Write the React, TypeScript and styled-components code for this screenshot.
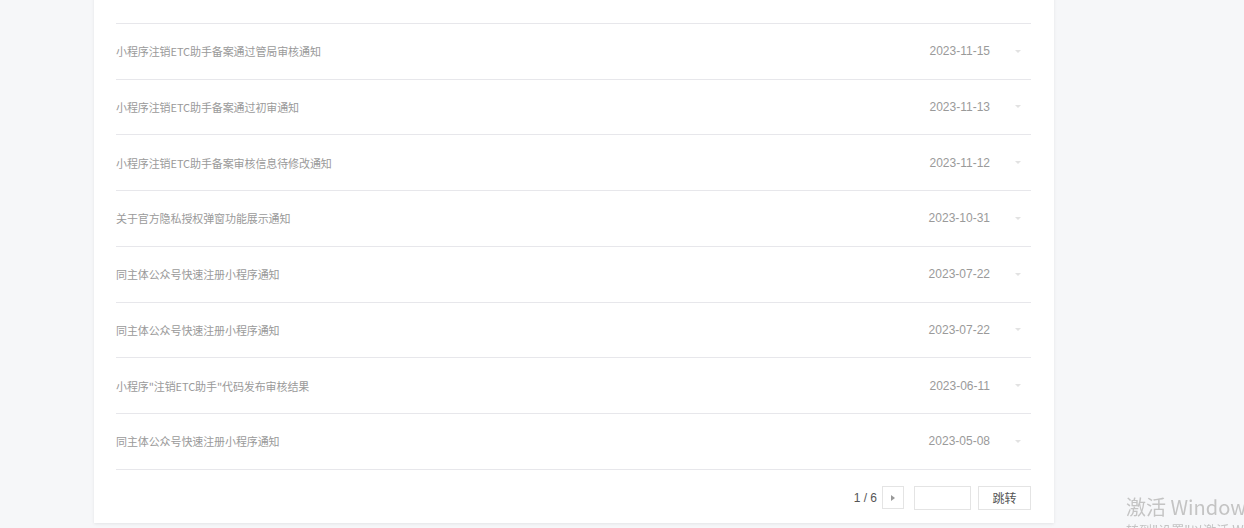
import React from 'react';
import styled, { createGlobalStyle } from 'styled-components';

const GlobalStyle = createGlobalStyle`
  html, body {
    margin: 0;
    padding: 0;
    background: #f6f7f9;
    font-family: "Noto Sans", "Noto Sans CJK SC", sans-serif;
    overflow: hidden;
  }
`;

const Page = styled.div`
  display: flex;
  padding-left: 94px;
  height: 528px;
  overflow: hidden;
`;

const Card = styled.section`
  width: 960px;
  margin-top: -32px;
  align-self: flex-start;
  background: #fff;
  box-shadow: 0 1px 3px rgba(0, 0, 0, 0.08);
  padding: 0 23px 13px 22px;
  box-sizing: border-box;
`;

const List = styled.ul`
  list-style: none;
  margin: 0;
  padding: 0;
`;

const Row = styled.li`
  display: flex;
  align-items: center;
  height: 55.75px;
  box-sizing: border-box;
  border-bottom: 1px solid #e7e7eb;
  font-size: 12px;
  color: #9a9a9a;
`;

const Title = styled.span`
  flex: 1;
  font-family: "Noto Sans CJK SC", sans-serif;
  font-size: 11px;
  letter-spacing: -0.1px;
`;

const Date = styled.span`
  font-family: "Liberation Sans", sans-serif;
  font-size: 12px;
  color: #9a9a9a;
`;

const Caret = styled.span`
  width: 0;
  height: 0;
  margin: 0 10px 0 25px;
  border-left: 3px solid transparent;
  border-right: 3px solid transparent;
  border-top: 3px solid #e2e2e2;
`;

const Pager = styled.div`
  display: flex;
  justify-content: flex-end;
  align-items: center;
  padding-top: 16px;
  font-family: "Liberation Sans", sans-serif;
  font-size: 12px;
  color: #555;
`;

const PageNum = styled.span`
  margin-right: 5px;
`;

const NextBtn = styled.button`
  width: 22px;
  height: 23px;
  padding: 0;
  border: 1px solid #e4e4e4;
  background: #fff;
  display: flex;
  align-items: center;
  justify-content: center;
  margin-right: 10px;
  &::after {
    content: '';
    border-top: 3.5px solid transparent;
    border-bottom: 3.5px solid transparent;
    border-left: 4px solid #999;
  }
`;

const JumpInput = styled.input`
  width: 57px;
  height: 24px;
  box-sizing: border-box;
  border: 1px solid #e4e4e4;
  margin-right: 7px;
  outline: none;
`;

const JumpBtn = styled.button`
  width: 53px;
  height: 24px;
  box-sizing: border-box;
  border: 1px solid #e4e4e4;
  background: #fff;
  font-family: "Noto Sans CJK SC", sans-serif;
  font-size: 12px;
  color: #555;
  padding: 0;
`;

const Watermark = styled.div`
  position: fixed;
  left: 1126px;
  top: 493px;
  white-space: nowrap;
  color: #c4c4c4;
  font-family: "Noto Sans CJK SC", "Noto Sans", sans-serif;
`;

const WmTitle = styled.div`
  font-size: 20px;
  line-height: 28px;
`;

const WmSub = styled.div`
  font-size: 13px;
  line-height: 18px;
`;

const notices = [
  { title: '', date: '' },
  { title: '小程序注销ETC助手备案通过管局审核通知', date: '2023-11-15' },
  { title: '小程序注销ETC助手备案通过初审通知', date: '2023-11-13' },
  { title: '小程序注销ETC助手备案审核信息待修改通知', date: '2023-11-12' },
  { title: '关于官方隐私授权弹窗功能展示通知', date: '2023-10-31' },
  { title: '同主体公众号快速注册小程序通知', date: '2023-07-22' },
  { title: '同主体公众号快速注册小程序通知', date: '2023-07-22' },
  { title: '小程序"注销ETC助手"代码发布审核结果', date: '2023-06-11' },
  { title: '同主体公众号快速注册小程序通知', date: '2023-05-08' },
];

export default function App() {
  return (
    <>
      <GlobalStyle />
      <Page>
        <Card>
          <List>
            {notices.map((n, i) => (
              <Row key={i}>
                <Title>{n.title}</Title>
                {n.date && <Date>{n.date}</Date>}
                {n.date && <Caret />}
              </Row>
            ))}
          </List>
          <Pager>
            <PageNum>1 / 6</PageNum>
            <NextBtn aria-label="下一页" />
            <JumpInput />
            <JumpBtn>跳转</JumpBtn>
          </Pager>
        </Card>
      </Page>
      <Watermark>
        <WmTitle>激活 Windows</WmTitle>
        <WmSub>转到"设置"以激活 Windows。</WmSub>
      </Watermark>
    </>
  );
}
